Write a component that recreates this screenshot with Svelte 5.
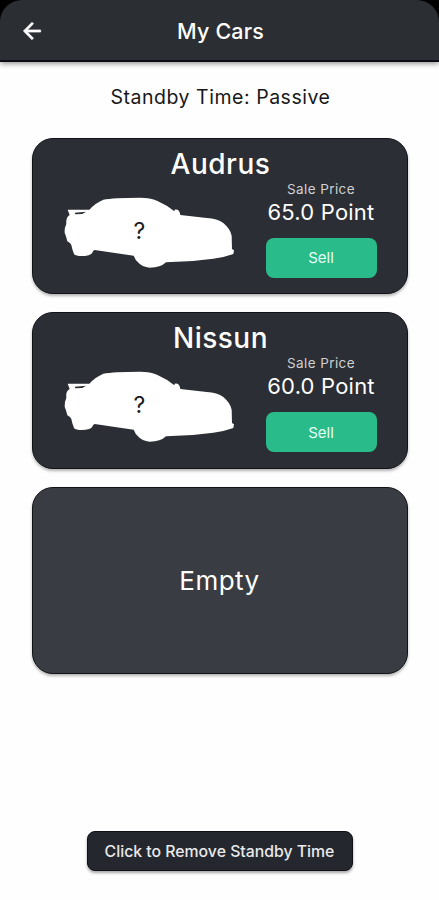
<script>
    let cars = [
        { name: 'Audrus', price: '65.0' },
        { name: 'Nissun', price: '60.0' }
    ]
    let standby = 'Passive'
</script>

<div class="screen">
    <div class="top">
        <header>
            <button class="back" aria-label="Back">
                <svg viewBox="0 0 24 24">
                    <path d="M20 11H7.83l5.59-5.59L12 4l-8 8 8 8 1.41-1.41L7.83 13H20z"/>
                </svg>
            </button>
            <h1>My Cars</h1>
        </header>
    </div>

    <p class="standby">Standby Time: {standby}</p>

    <main>
        {#each cars as car}
            <section class="card">
                <h2>{car.name}</h2>
                <div class="row">
                    <div class="picture">
                        <svg viewBox="42 48 513 219" width="171" height="73">
                            <path fill-rule="evenodd" d="M53 89 L118 89 Q136 69 160 59 Q190 53 270 53 Q302 53 321 62 Q351 75 373 94 L374 89 Q388 86 391 105 L470 114 Q502 116 520 129 Q542 148 545 167 L546 207 L552 211 L550 222 Q520 233 490 236 Q420 246 348 247 Q332 263 299 263 Q276 262 264 247 Q256 240 251 227 L134 210 Q129 211 126 220 Q118 228 96 228 Q77 228 72 222 Q66 207 64 195 Q62 189 52 184 Q49 170 44 158 Q43 144 49 132 Q47 114 55 108 L59 105 Z M74 98 L76 103 L97 102 L108 95 Z"/>
                        </svg>
                        <span>?</span>
                    </div>
                    <div class="sale">
                        <small>Sale Price</small>
                        <strong>{car.price} Point</strong>
                        <button class="sell">Sell</button>
                    </div>
                </div>
            </section>
        {/each}
        <section class="card empty">Empty</section>
    </main>

    <button class="remove">Click to Remove Standby Time</button>
</div>

<style>
:global(body) {
    background: #fefefe;
}

.screen {
    box-sizing: border-box;
    height: 900px;
    display: flex;
    flex-direction: column;
    align-items: center;
    padding-bottom: 29px;
    overflow: hidden;
    font-family: Inter, sans-serif;
    color: #17181b;
}

.top {
    width: 100%;
    background: #000;
    box-shadow: 0 2px 5px rgba(0, 0, 0, 0.4);
}

header {
    box-sizing: border-box;
    height: 62px;
    display: grid;
    grid-template-columns: 64px 1fr 64px;
    align-items: center;
    padding-top: 2px;
    border-bottom: 2px solid #0c0b16;
    border-radius: 22px 22px 0 0;
    background: #2b2e33;
    color: #fff;
}

button {
    border: 0;
    padding: 0;
    font-family: inherit;
    color: inherit;
}

.back {
    display: flex;
    justify-content: center;
    background: none;
}

.back svg {
    fill: #fff;
    stroke: #fff;
    stroke-width: 0.6;
    width: 26px;
    height: 26px;
}

h1 {
    margin: 0;
    padding-left: 2px;
    font-size: 21.5px;
    font-weight: 500;
    line-height: 30px;
    letter-spacing: 0.2px;
    text-align: center;
}

.standby {
    margin: 23px 0 0;
    padding-left: 2px;
    font-size: 19.5px;
    line-height: 24px;
    letter-spacing: 0.53px;
}

main {
    width: 376px;
    margin: 28.5px 0 auto;
    display: flex;
    flex-direction: column;
    gap: 18px;
}

.card {
    box-sizing: border-box;
    height: 156.5px;
    padding-top: 8px;
    border: 1px solid #111318;
    border-radius: 21px;
    background: #2b2e34;
    box-shadow: 0 2px 3px rgba(0, 0, 0, 0.3);
    color: #fff;
}

h2 {
    margin: 0;
    padding-left: 2px;
    font-size: 28px;
    font-weight: 500;
    line-height: 34px;
    letter-spacing: 0.5px;
    text-align: center;
}

.row {
    display: flex;
    justify-content: space-between;
    padding: 0 30px 0 31px;
}

.picture {
    display: grid;
    height: 73px;
    margin-top: 15px;
}

.picture svg,
.picture span {
    grid-area: 1 / 1;
}

.picture svg {
    fill: #fff;
}

.picture span {
    place-self: center;
    margin: -3px 19px 0 0;
    font-size: 23px;
    line-height: 28px;
    color: #1c1c1c;
}

.sale {
    width: 111px;
    display: flex;
    flex-direction: column;
    align-items: center;
    white-space: nowrap;
}

small {
    margin-top: 1px;
    font-size: 13.5px;
    line-height: 15px;
    letter-spacing: 0.4px;
    color: #cfd0d2;
}

strong {
    margin-top: 2px;
    font-size: 22px;
    font-weight: 400;
    line-height: 26px;
    letter-spacing: 0.2px;
}

.sell {
    width: 111px;
    height: 40px;
    margin-top: 13px;
    border-radius: 8px;
    background: #2abb8a;
    color: #e4fff6;
    font-size: 15px;
}

.empty {
    height: 187px;
    padding: 0;
    display: flex;
    align-items: center;
    justify-content: center;
    background: #393c42;
    font-size: 26px;
    letter-spacing: 0.5px;
}

.remove {
    width: 266px;
    height: 40px;
    border: 1px solid #0f1116;
    border-radius: 8px;
    background: #25272e;
    box-shadow: 0 2px 3px rgba(0, 0, 0, 0.35);
    color: #e9e9eb;
    font-size: 15.8px;
    font-weight: 500;
    white-space: nowrap;
}
</style>
